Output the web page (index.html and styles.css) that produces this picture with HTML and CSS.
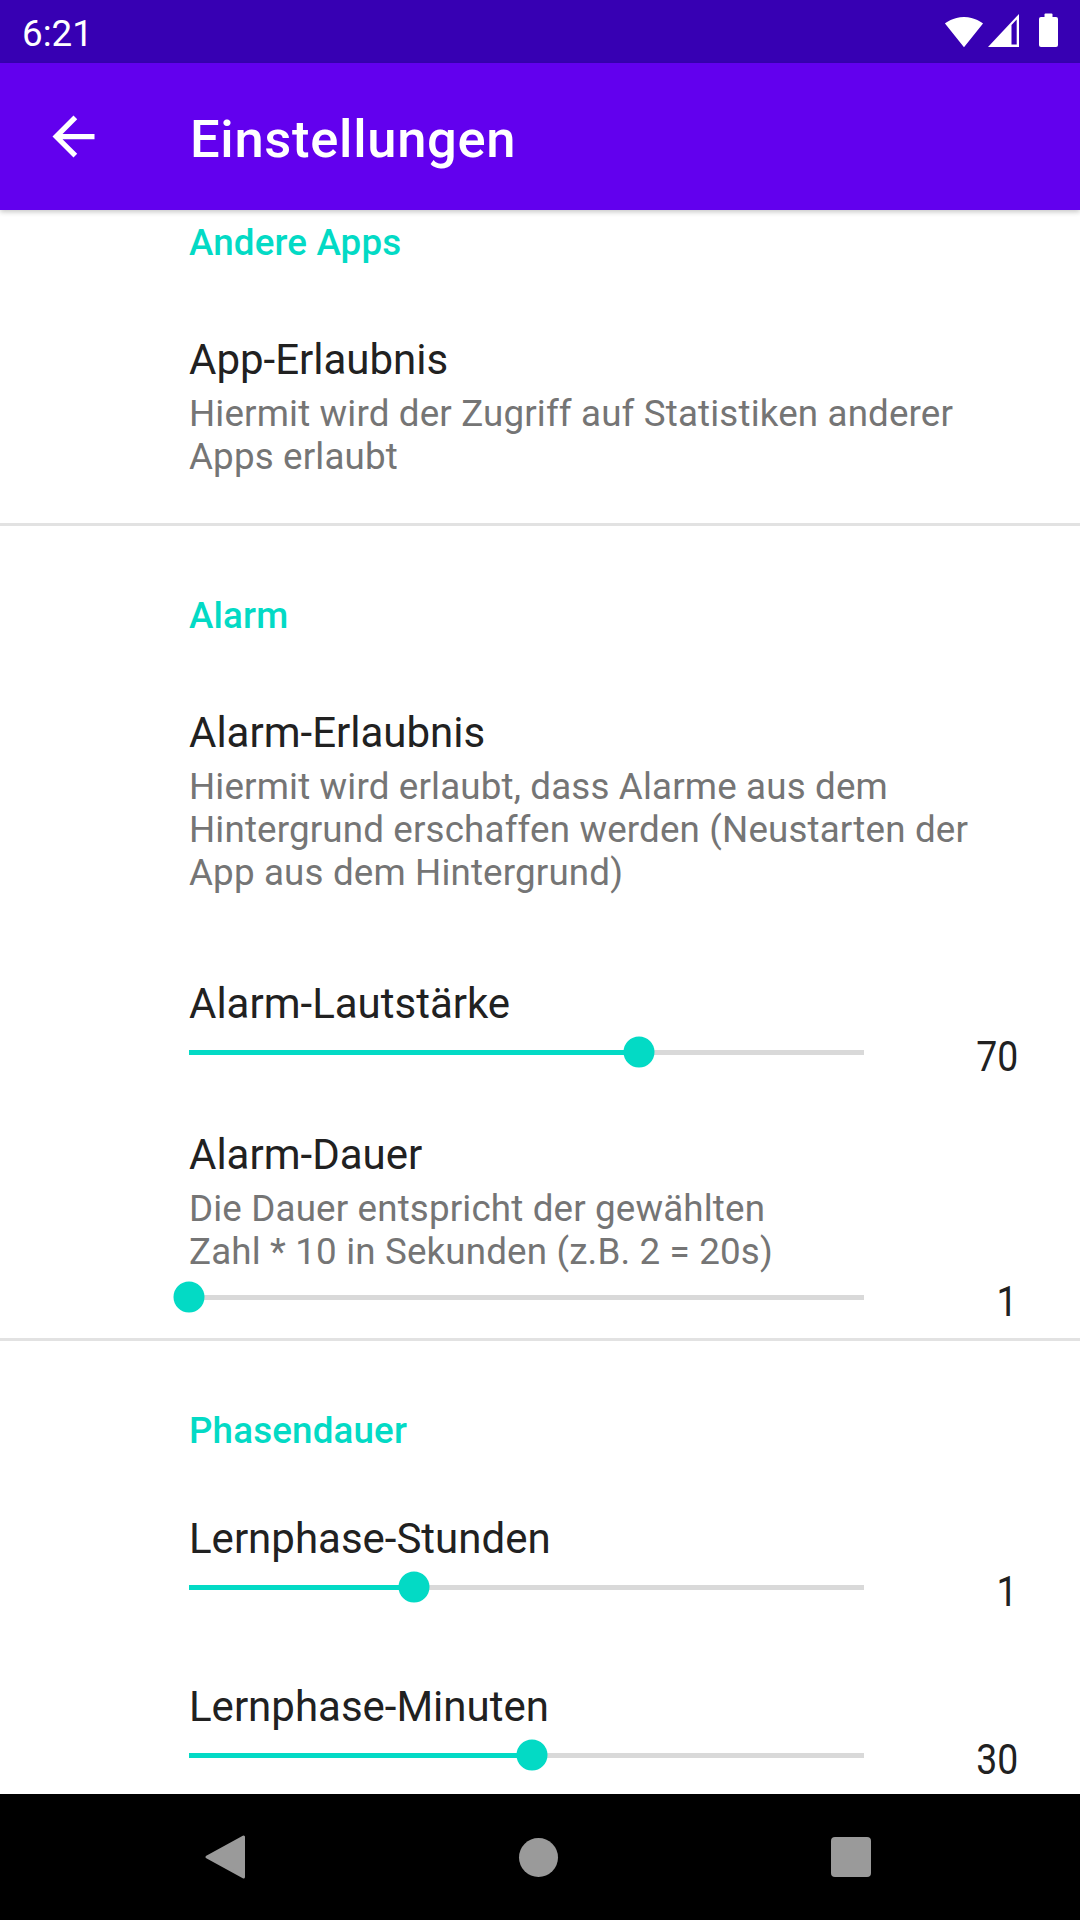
FILE: index.html
```html
<!DOCTYPE html>
<html lang="de">
<head>
<meta charset="utf-8">
<title>Einstellungen</title>
<link rel="stylesheet" href="styles.css">
</head>
<body>
<div class="screen">
  <div class="statusbar">
    <span class="clock">6:21</span>
    <svg class="sys-icons" width="116" height="40" viewBox="944 10 116 40">
      <path transform="translate(944.4 12.1) scale(1.633)" fill="#fff" d="M12,21.5L23.64,7C23.19,6.66 18.72,3 12,3 5.27,3 0.81,6.66 0.36,7L12,21.5z"/>
      <polygon fill="#fff" points="988,47 1019,47 1019,14"/>
      <polygon fill="#3700B3" points="1011.5,44.5 1016.7,44.5 1016.7,19.6 1011.5,25"/>
      <rect x="1039" y="17" width="19" height="30" rx="2" fill="#fff"/>
      <rect x="1044.5" y="13.5" width="8" height="5" rx="1" fill="#fff"/>
    </svg>
  </div>

  <header class="appbar">
    <svg class="back" width="63" height="63" viewBox="0 0 24 24">
      <path fill="#fff" d="M20,11H7.83l5.59,-5.59L12,4l-8,8 8,8 1.41,-1.41L7.83,13H20v-2z"/>
    </svg>
    <h1 class="title">Einstellungen</h1>
  </header>

  <main class="content">
    <section class="group group-first">
      <div class="category">Andere Apps</div>
      <div class="pref pref-after-cat">
        <div class="pref-title">App-Erlaubnis</div>
        <div class="pref-summary">Hiermit wird der Zugriff auf Statistiken anderer<br>Apps erlaubt</div>
      </div>
    </section>
    <div class="divider divider-after-pref"></div>

    <section class="group">
      <div class="category">Alarm</div>
      <div class="pref pref-after-cat">
        <div class="pref-title">Alarm-Erlaubnis</div>
        <div class="pref-summary">Hiermit wird erlaubt, dass Alarme aus dem<br>Hintergrund erschaffen werden (Neustarten der<br>App aus dem Hintergrund)</div>
      </div>
      <div class="pref seek-after-pref">
        <div class="pref-title">Alarm-Lautstärke</div>
      </div>
      <div class="slider-row">
        <div class="track">
          <div class="fill" style="width:66.6%"></div>
          <div class="thumb" style="left:66.6%"></div>
        </div>
        <div class="value"><span>70</span></div>
      </div>
      <div class="pref seek-with-summary">
        <div class="pref-title">Alarm-Dauer</div>
        <div class="pref-summary">Die Dauer entspricht der gewählten<br>Zahl * 10 in Sekunden (z.B. 2 = 20s)</div>
      </div>
      <div class="slider-row">
        <div class="track">
          <div class="fill" style="width:0%"></div>
          <div class="thumb" style="left:0%"></div>
        </div>
        <div class="value"><span>1</span></div>
      </div>
    </section>
    <div class="divider divider-after-seek"></div>

    <section class="group">
      <div class="category">Phasendauer</div>
      <div class="pref seek-after-cat">
        <div class="pref-title">Lernphase-Stunden</div>
      </div>
      <div class="slider-row">
        <div class="track">
          <div class="fill" style="width:33.4%"></div>
          <div class="thumb" style="left:33.4%"></div>
        </div>
        <div class="value"><span>1</span></div>
      </div>
      <div class="pref seek-after-seek">
        <div class="pref-title">Lernphase-Minuten</div>
      </div>
      <div class="slider-row">
        <div class="track">
          <div class="fill" style="width:50.8%"></div>
          <div class="thumb" style="left:50.8%"></div>
        </div>
        <div class="value"><span>30</span></div>
      </div>
    </section>
  </main>

  <nav class="navbar">
    <div class="nav-slot">
      <svg width="42" height="46" viewBox="0 0 42 46">
        <polygon points="3,23 39.5,3 39.5,43" fill="#9a9a9a" stroke="#9a9a9a" stroke-width="3" stroke-linejoin="round"/>
      </svg>
    </div>
    <div class="nav-slot"><span class="nav-home"></span></div>
    <div class="nav-slot"><span class="nav-recents"></span></div>
  </nav>
</div>
</body>
</html>
```

FILE: styles.css
```css
* {
  box-sizing: border-box;
}

html, body {
  margin: 0;
  padding: 0;
}

body {
  font-family: "Roboto", "Noto Sans", sans-serif;
  background: #fff;
}

.screen {
  width: 1080px;
  height: 1920px;
  display: flex;
  flex-direction: column;
  overflow: hidden;
  background: #fff;
}

/* Status bar */
.statusbar {
  height: 63px;
  flex: 0 0 63px;
  background: #3700B3;
  display: flex;
  align-items: flex-start;
  padding: 0 20px 0 22px;
  color: #fff;
}

.clock {
  font-size: 36.75px;
  line-height: 43px;
  margin-top: 12px;
}

.sys-icons {
  margin-left: auto;
  margin-top: 10px;
  display: block;
}

/* App bar */
.appbar {
  height: 147px;
  flex: 0 0 147px;
  background: #6200EE;
  display: flex;
  align-items: center;
  padding-left: 42px;
  box-shadow: 0 2px 5px rgba(0, 0, 0, 0.22);
  position: relative;
  z-index: 1;
}

.back {
  display: block;
  flex: 0 0 63px;
}

.title {
  margin: 0 0 0 85px;
  padding-top: 5px;
  font-size: 52.5px;
  font-weight: 500;
  letter-spacing: 0.7px;
  color: #fff;
  line-height: normal;
}

/* Content */
.content {
  flex: 1 1 auto;
  overflow: hidden;
  background: #fff;
}

.group-first .category {
  margin-top: 11px;
}

.category {
  margin-top: 68px;
  padding-left: 189px;
  font-size: 36.75px;
  line-height: 43px;
  font-weight: 500;
  letter-spacing: 0.15px;
  color: #03DAC5;
}

.pref {
  padding-left: 189px;
  padding-right: 42px;
}

.pref-after-cat {
  margin-top: 71px;
}

.seek-after-cat {
  margin-top: 62px;
}

.seek-after-pref {
  margin-top: 85px;
}

.seek-with-summary {
  margin-top: 54px;
}

.seek-after-seek {
  margin-top: 71px;
}

.pref-title {
  font-size: 42px;
  line-height: 49px;
  color: #212121;
}

.pref-summary {
  margin-top: 8px;
  font-size: 36.75px;
  line-height: 43px;
  letter-spacing: 0.15px;
  color: #757575;
}

.divider {
  height: 3px;
  background: #e2e2e2;
}

.divider-after-pref {
  margin-top: 45px;
}

.divider-after-seek {
  margin-top: 17px;
}

/* Slider */
.slider-row {
  display: flex;
  align-items: flex-start;
  height: 48px;
  padding-left: 189px;
}

.track {
  position: relative;
  width: 675px;
  flex: 0 0 675px;
  height: 5px;
  margin-top: 21.5px;
  background: #d9d9d9;
}

.fill {
  height: 100%;
  background: #03DAC5;
}

.thumb {
  position: absolute;
  top: 50%;
  width: 31px;
  height: 31px;
  border-radius: 50%;
  background: #03DAC5;
  transform: translate(-50%, -50%);
}

.value {
  flex: 1 1 auto;
  margin-top: 4px;
  padding-right: 62px;
  text-align: right;
  font-size: 42px;
  line-height: 49px;
  color: #212121;
}

.value span {
  display: inline-block;
  transform: scaleX(0.89);
  transform-origin: right center;
}

/* Navigation bar */
.navbar {
  height: 126px;
  flex: 0 0 126px;
  background: #000;
  display: flex;
  align-items: center;
  padding-left: 162px;
  gap: 187px;
}

.nav-slot {
  width: 126px;
  height: 126px;
  display: flex;
  align-items: center;
  justify-content: center;
}

.nav-slot svg {
  display: block;
}

.nav-home {
  width: 39px;
  height: 39px;
  border-radius: 50%;
  background: #9a9a9a;
}

.nav-recents {
  width: 40px;
  height: 40px;
  border-radius: 4px;
  background: #9a9a9a;
}
```
